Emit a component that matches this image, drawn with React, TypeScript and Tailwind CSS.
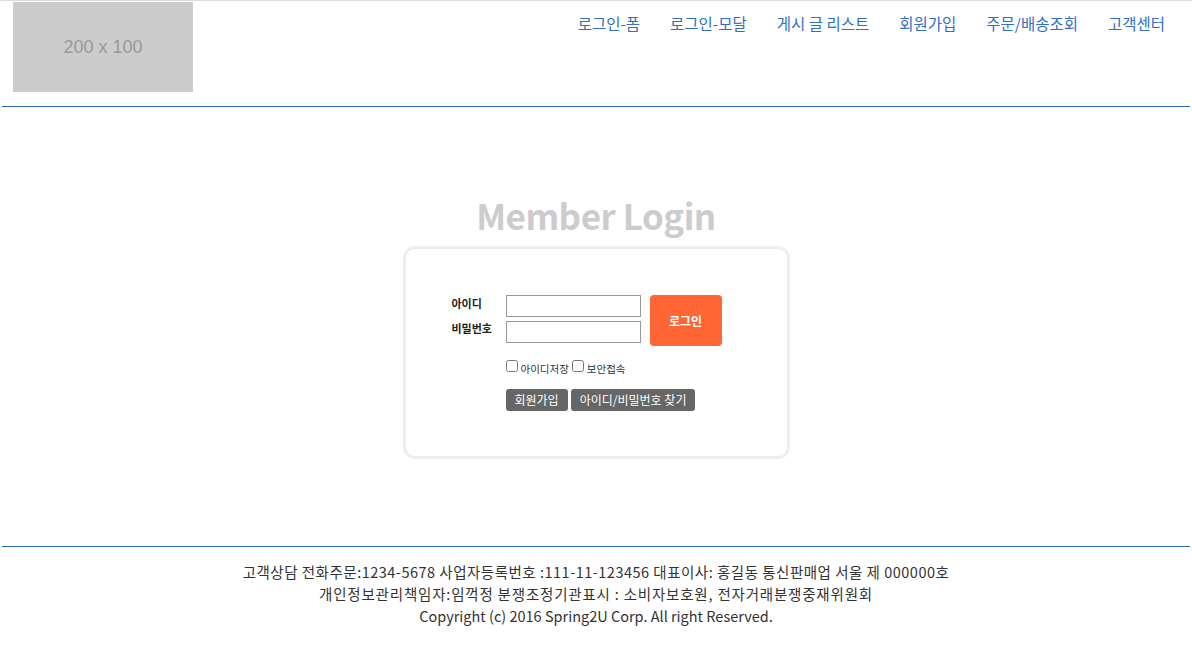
import React from 'react';

const navItems = ['로그인-폼', '로그인-모달', '게시 글 리스트', '회원가입', '주문/배송조회', '고객센터'];

const font = { fontFamily: '"Noto Sans CJK KR", "Noto Sans", sans-serif' };

const Header: React.FC = () => (
  <header className="border-t border-[#dddddd]">
    <div className="flex justify-between">
      <div className="ml-[13px] mt-px flex h-[90px] w-[180px] items-center justify-center bg-[#cccccc]">
        <span className="text-[18px] text-[#999999]" style={{ fontFamily: '"Liberation Sans", Arial, sans-serif' }}>
          200 x 100
        </span>
      </div>
      <nav className="mr-[27px] mt-[12px] flex h-[22px] items-center gap-[30px]">
        {navItems.map((item) => (
          <a key={item} href="#" className="text-[15.5px] leading-none text-[#2f6fc4]">
            {item}
          </a>
        ))}
      </nav>
    </div>
    <div className="mx-[2px] mt-[14px] h-px bg-[#2a6ebb]" />
  </header>
);

const LoginBox: React.FC = () => (
  <section className="flex flex-col items-center pt-[90px]">
    <h1 className="text-[35px] font-bold leading-none tracking-[-0.5px] text-[#cccccc]">Member Login</h1>
    <div className="mt-[14px] h-[213px] w-[387px] rounded-[12px] border-[3px] border-[#eeeeee] pl-[46px] pt-[46px]">
      <div className="flex">
        <div className="flex w-[54px] flex-col text-[11px] font-bold leading-[16px] text-[#222222]">
          <span className="h-[25px]">아이디</span>
          <span>비밀번호</span>
        </div>
        <div className="flex flex-col gap-[4px]">
          <input className="h-[22px] w-[135px] border border-[#999999] bg-white px-1 text-[12px] outline-none" />
          <input
            type="password"
            className="h-[22px] w-[135px] border border-[#999999] bg-white px-1 text-[12px] outline-none"
          />
        </div>
        <button className="ml-[9px] h-[51px] w-[72px] rounded-[4px] bg-[#ff6633] text-[12px] font-bold text-white">
          로그인
        </button>
      </div>
      <div className="ml-[54px] mt-[14px] flex items-end text-[10.5px] text-[#333333]">
        <input type="checkbox" className="mb-[5px] h-[12px] w-[12px]" />
        <span className="ml-[3px]">아이디저장</span>
        <input type="checkbox" className="mb-[5px] ml-[3px] h-[12px] w-[12px]" />
        <span className="ml-[3px]">보안접속</span>
      </div>
      <div className="ml-[54px] mt-[12px] flex gap-[3px]">
        <button className="h-[22px] rounded-[3px] bg-[#666666] px-[9px] text-[12px] leading-none text-white">
          회원가입
        </button>
        <button className="h-[22px] rounded-[3px] bg-[#666666] px-[9px] text-[12px] leading-none text-white">
          아이디/비밀번호 찾기
        </button>
      </div>
    </div>
  </section>
);

const Footer: React.FC = () => (
  <footer className="mt-[87px]">
    <div className="mx-[2px] h-px bg-[#2a6ebb]" />
    <div className="pt-[14px] text-center text-[14.5px] leading-[22px] text-[#333333]">
      <p className="tracking-[0.5px]">
        고객상담 전화주문:1234-5678 사업자등록번호 :111-11-123456 대표이사: 홍길동 통신판매업 서울 제 000000호
      </p>
      <p className="tracking-[0.8px]">개인정보관리책임자:임꺽정 분쟁조정기관표시 : 소비자보호원, 전자거래분쟁중재위원회</p>
      <p>Copyright (c) 2016 Spring2U Corp. All right Reserved.</p>
    </div>
  </footer>
);

const App: React.FC = () => (
  <div className="min-h-[656px] w-full bg-white" style={font}>
    <Header />
    <LoginBox />
    <Footer />
  </div>
);

export default App;
